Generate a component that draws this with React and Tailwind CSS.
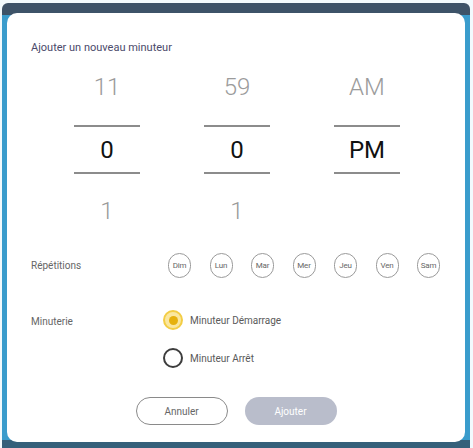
import React, { useState } from "react";

const DAYS = ["Dim", "Lun", "Mar", "Mer", "Jeu", "Ven", "Sam"];

const PickerColumn = ({ top, value, bottom }) => (
  <div className="flex w-[66px] flex-col items-center">
    <div className="h-[34px] text-[24px] leading-[34px] font-light text-[#9b9b9b]">{top}</div>
    <div className="mt-[21px] h-[2px] w-full bg-[#8c8c8c]" />
    <div className="mt-[6px] h-[34px] text-[24px] leading-[34px] text-[#111]">{value}</div>
    <div className="mt-[5px] h-[2px] w-full bg-[#8c8c8c]" />
    <div className="mt-[20px] h-[34px] text-[24px] leading-[34px] font-light text-[#9b9b9b]">{bottom}</div>
  </div>
);

const Radio = ({ checked, label, onClick }) => (
  <button type="button" onClick={onClick} className="flex items-center gap-[7px]">
    {checked ? (
      <span className="flex h-[20px] w-[20px] items-center justify-center rounded-full border-2 border-[#f3cd45] bg-[#fae7a0]">
        <span className="h-[9px] w-[9px] rounded-full bg-[#e6b10e]" />
      </span>
    ) : (
      <span className="h-[20px] w-[20px] rounded-full border-2 border-[#3d3d3d] bg-white" />
    )}
    <span className="text-[10px] text-[#5a5a5a]">{label}</span>
  </button>
);

export default function App() {
  const [mode, setMode] = useState("start");

  return (
    <div className="h-[448px] w-[473px] bg-[#f2fafd] pt-[3px] pl-[2px] pr-[3px] font-['Roboto',sans-serif]">
      <div className="flex h-full flex-col rounded-t-[6px] bg-[linear-gradient(to_bottom,#3d5368_0,#3d5368_12px,#3a9ccc_12px,#3a9ccc_calc(100%-8px),#35607a_calc(100%-8px))] px-[5px] pt-[10px] pb-[6px]">
        <div className="flex h-full flex-col rounded-[10px] bg-white pt-[28px] pb-[17px]">
          <div className="pl-[24px] text-[11px] leading-[14px] text-[#4b4a6b]">Ajouter un nouveau minuteur</div>

          <div className="mt-[15px] flex gap-[64px] pl-[67px]">
            <PickerColumn top="11" value="0" bottom="1" />
            <PickerColumn top="59" value="0" bottom="1" />
            <PickerColumn top="AM" value="PM" bottom="" />
          </div>

          <div className="mt-[25px] flex items-center pl-[24px]">
            <div className="w-[137px] text-[10px] text-[#666]">Répétitions</div>
            <div className="flex gap-[18.5px]">
              {DAYS.map((d) => (
                <div
                  key={d}
                  className="flex h-[25px] w-[23px] items-center justify-center rounded-full border-[1.5px] border-[#9a9a9a] text-[8px] tracking-[-0.2px] text-[#666]"
                >
                  {d}
                </div>
              ))}
            </div>
          </div>

          <div className="mt-[32px] flex pl-[24px]">
            <div className="w-[132px] pt-[4px] text-[10px] text-[#666]">Minuterie</div>
            <div className="flex flex-col gap-[18px]">
              <Radio checked={mode === "start"} label="Minuteur Démarrage" onClick={() => setMode("start")} />
              <Radio checked={mode === "stop"} label="Minuteur Arrêt" onClick={() => setMode("stop")} />
            </div>
          </div>

          <div className="mt-[29px] flex justify-center gap-[17px]">
            <button className="h-[28px] w-[92px] rounded-full border-[1.5px] border-[#8a8a8a] text-[10px] text-[#666]">
              Annuler
            </button>
            <button disabled className="h-[28px] w-[92px] rounded-full bg-[#b9bdcb] text-[10px] text-white">
              Ajouter
            </button>
          </div>
        </div>
      </div>
    </div>
  );
}
